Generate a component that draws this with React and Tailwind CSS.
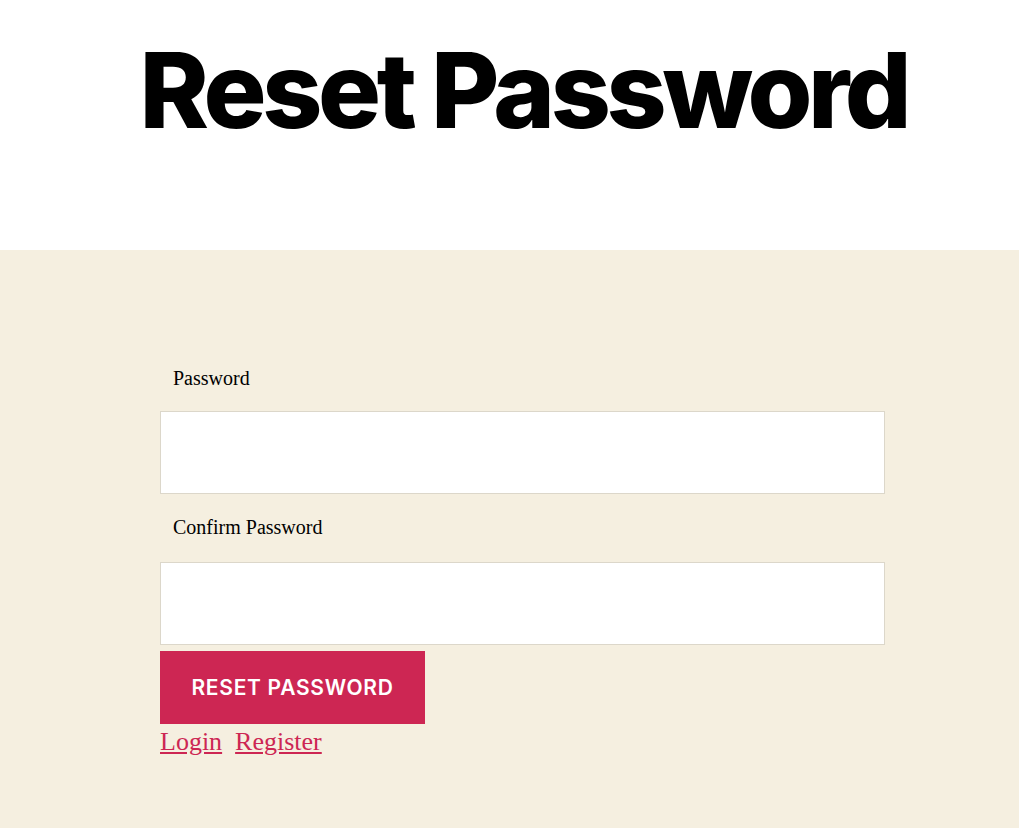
export default function App() {
    return (
        <div className="min-h-[828px] bg-white">
            {/* header */}
            <div className="h-[250px] flex justify-center pl-[28px] pt-[24px]">
                <h1
                    className="text-[105px] leading-[1.25] font-extrabold text-black tracking-[-0.0415em]"
                    style={{ fontFamily: "Inter, 'Liberation Sans', sans-serif" }}
                >
                    Reset Password
                </h1>
            </div>
            <div className="bg-[#f5efe0] min-h-[578px] pt-[114px]">
                <form className="ml-[160px] w-[725px]" style={{ fontFamily: "'Liberation Serif', serif" }}>
                    <label className="block px-[13px] text-[20px] leading-[28px] text-black">Password</label>
                    <input type="password" className="block mt-[19px] w-full h-[83px] bg-white border border-[#dcd7ca]" />
                    <label className="block mt-[19px] px-[13px] text-[20px] leading-[28px] text-black">Confirm Password</label>
                    <input type="password" className="block mt-[21px] w-full h-[83px] bg-white border border-[#dcd7ca]" />
                    <button
                        type="button"
                        className="block mt-[6px] w-[265px] h-[73px] bg-[#cd2653] text-white text-[21px] font-semibold uppercase tracking-[0.0333em]"
                        style={{ fontFamily: "Inter, 'Liberation Sans', sans-serif" }}
                    >
                        Reset Password
                    </button>
                    <div className="flex gap-[13px] text-[26px] leading-[36px] text-[#cd2653]">
                        <a href="#" className="underline">Login</a>
                        <a href="#" className="underline">Register</a>
                    </div>
                </form>
            </div>
        </div>
    );
}
